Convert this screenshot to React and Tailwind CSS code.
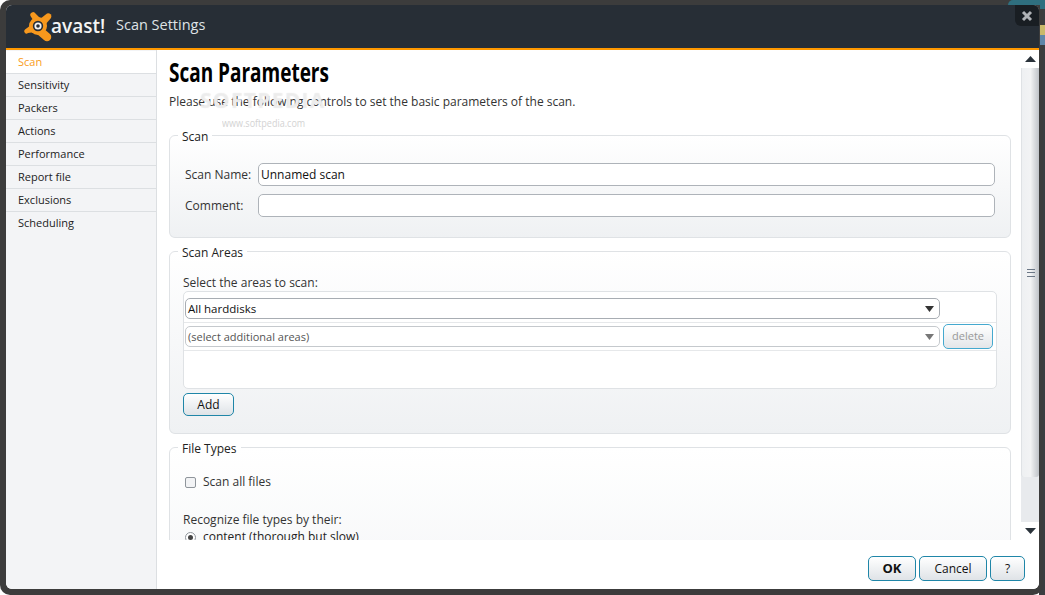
import React from 'react';

const menu = ['Scan', 'Sensitivity', 'Packers', 'Actions', 'Performance', 'Report file', 'Exclusions', 'Scheduling'];

const Logo = () => (
  <svg width="33" height="33" viewBox="0 0 33 33" className="shrink-0">
    <g fill="#f7981d">
      <circle cx="15" cy="16" r="9" />
      <path d="M10 10 L7.5 6 a2.8 2.8 0 0 1 5 -2.5 L17 8z" />
      <path d="M17 9 L24 3.5 a3.2 3.2 0 0 1 4 4.5 L22 15z" />
      <path d="M20 18 L27 24 a4 4 0 1 1 -6 6 L14 24z" />
      <path d="M8 15 L2 19.5 a2.3 2.3 0 0 0 3 3.5 L12 22z" />
    </g>
    <circle cx="15" cy="16" r="5.2" fill="#272e36" />
    <circle cx="15" cy="16" r="3.6" fill="#f2f2f2" />
    <circle cx="15" cy="16" r="1.8" fill="#272e36" />
  </svg>
);

const Arrow = ({ up, small, className }) => (
  <svg width={small ? 9 : 11} height={small ? 6 : 6} viewBox="0 0 11 7" preserveAspectRatio="none" className={className}>
    <path d={up ? 'M5.5 0 L11 7 L0 7z' : 'M0 0 L11 0 L5.5 7z'} fill="currentColor" />
  </svg>
);

const Group = ({ title, className, children }) => (
  <fieldset className={`border border-[#dfe2e5] rounded-md bg-gradient-to-b from-white to-[#eff1f3] ml-[12px] mr-[10px] pl-[13px] pr-[13px] ${className}`}>
    <legend className="-ml-[5px] px-[4px] pt-[4px] text-[12px] leading-[14px] text-[#222]">{title}</legend>
    {children}
  </fieldset>
);

const Select = ({ label, muted }) => (
  <div className={`w-[755px] h-[21px] border rounded-[5px] bg-white pl-[2px] pr-[4px] flex items-center justify-between ${muted ? 'border-[#c5c9cd] text-[11px] text-[#555]' : 'border-[#a8adb3] text-[11.5px] text-[#111]'}`}>
    <span className={muted ? 'pt-[1px]' : ''}>{label}</span>
    <Arrow small className={`mr-[1px] ${muted ? 'text-[#777]' : 'text-[#333]'}`} />
  </div>
);

const Button = ({ children, className }) => (
  <button className={`border border-[#1f86a8] rounded-[5px] bg-gradient-to-b from-white to-[#dfe3e7] text-[12px] text-[#111] ${className}`}>
    {children}
  </button>
);

export default function App() {
  return (
    <div className="relative w-[1045px] h-[595px] overflow-hidden bg-white font-['Open_Sans',sans-serif]">
      <div className="absolute right-0 top-0 w-[6px] h-[595px] bg-[#3a3d40]" />
      <div className="relative w-[1043px] h-[595px] bg-[#3c3c3c] rounded-[10px] pl-[6px] pr-[4px] pt-[5px] pb-[6px]">
        <div className="h-full flex flex-col rounded-[6px] overflow-hidden bg-white">
          <header className="relative h-[45px] shrink-0 bg-[#272e36] border-b-2 border-[#ff9800] flex items-center pl-[17px]">
            <Logo />
            <span className="-ml-[5px] pb-[1px] text-[#f4f4f4] font-semibold text-[19px] leading-none w-[59px] shrink-0">avast!</span>
            <span className="ml-[6px] pb-[4px] text-[#dfe3e6] text-[14.5px]">Scan Settings</span>
            <div className="absolute right-0 top-0 w-[24px] h-[21px] bg-[#191e23] rounded-bl-[6px] flex items-center justify-center">
              <svg width="12" height="12" viewBox="0 0 12 12">
                <path d="M2 2 L10 10 M10 2 L2 10" stroke="#b0b3b7" strokeWidth="3" />
              </svg>
            </div>
          </header>

          <div className="flex-1 flex min-h-0">
            <nav className="w-[151px] shrink-0 pt-[1px] bg-[#f3f4f6] border-r border-[#dcdfe2]">
              {menu.map((item, i) => (
                <div
                  key={item}
                  className={`h-[23px] pl-[12px] flex items-center text-[11px] border-b border-[#dcdfe2] last:border-b-0 ${i === 0 ? 'bg-white text-[#f99d1c]' : 'text-[#222]'}`}
                >
                  {item}
                </div>
              ))}
            </nav>

            <div className="flex-1 min-w-0 flex flex-col">
              <div className="flex-1 min-h-0 flex">
                <main className="relative flex-1 min-w-0 h-[490px] overflow-hidden">
                  <h1 className="ml-[12px] pt-[6px] text-[26px] leading-[32px] font-bold text-black scale-x-[0.73] origin-left whitespace-nowrap">Scan Parameters</h1>
                  <p className="pl-[12px] pt-[6px] text-[12px] leading-[16px] text-[#333]">Please use the following controls to set the basic parameters of the scan.</p>

                  {/* softpedia watermark */}
                  <div className="absolute left-[43px] top-[37px] text-[21px] leading-[26px] font-bold tracking-[1.3px] text-white/40 [text-shadow:0_0_1px_#e2e2e2]">SOFTPEDIA</div>
                  <div className="absolute left-[65px] top-[65px] text-[11px] text-[#c9c9c9] opacity-80 scale-x-[0.82] origin-left">www.softpedia.com</div>

                  <Group title="Scan" className="mt-[16px] h-[112px]">
                    <div className="pt-[19px] text-[12px] text-[#333]">
                      <div className="flex items-center h-[23px]">
                        <label className="w-[75px] pl-[2px]">Scan Name:</label>
                        <input readOnly value="Unnamed scan" className="w-[737px] h-[23px] border border-[#aeb3b9] rounded-[5px] bg-white px-[2px] text-[12px] text-[#111]" />
                      </div>
                      <div className="flex items-center h-[23px] mt-[8px]">
                        <label className="w-[75px] pl-[2px]">Comment:</label>
                        <input readOnly className="w-[737px] h-[23px] border border-[#aeb3b9] rounded-[5px] bg-white" />
                      </div>
                    </div>
                  </Group>

                  <Group title="Scan Areas" className="mt-[4px] h-[192px]">
                    <div className="pt-[15px] text-[12px] leading-[16px] text-[#333]">Select the areas to scan:</div>
                    <div className="h-[98px] w-[814px] border border-[#dfe2e5] rounded-[5px] bg-white flex flex-col">
                      <div className="h-[31px] border-b border-[#e6e8ea] pl-[1px] pt-[6px]">
                        <Select label="All harddisks" />
                      </div>
                      <div className="h-[28px] border-b border-[#e6e8ea] pl-[1px] flex items-center gap-[3px]">
                        <Select label="(select additional areas)" muted />
                        <button className="w-[50px] h-[25px] border border-[#45a9cf] rounded-[5px] bg-gradient-to-b from-white to-[#e4e6e9] text-[11px] text-[#999]">delete</button>
                      </div>
                    </div>
                    <Button className="mt-[4px] w-[51px] h-[23px]">Add</Button>
                  </Group>

                  <Group title="File Types" className="mt-[4px] h-[240px]">
                    <div className="pt-[17px] pl-[2px] flex items-center text-[12px] text-[#333]">
                      <span className="w-[11px] h-[11px] border border-[#8f959b] rounded-[2px] bg-[#f2f3f5] mr-[7px]" />
                      Scan all files
                    </div>
                    <div className="pt-[21px] text-[12px] leading-[16px] text-[#333]">Recognize file types by their:</div>
                    <div className="mt-[1px] pl-[2px] flex items-center text-[12px] leading-[16px] text-[#222]">
                      <span className="w-[11px] h-[11px] border border-[#8f959b] rounded-full bg-white mr-[7px] flex items-center justify-center">
                        <span className="w-[5px] h-[5px] rounded-full bg-[#444]" />
                      </span>
                      content (thorough but slow)
                    </div>
                  </Group>
                </main>

                <div className="w-[18px] shrink-0 h-[490px] flex flex-col items-center text-[#2a323a]">
                  <div className="h-[18px] pt-[6px] flex justify-center"><Arrow up /></div>
                  <div className="flex-1 w-full bg-[#e8eaed] flex flex-col">
                    <div className="h-[409px] rounded-b-[3px] border-l border-[#dfe2e5] bg-gradient-to-r from-[#eef0f2] via-[#f2f3f4] to-[#bfc3c8] flex items-center justify-center">
                      <div className="w-[8px] h-[8px] border-y border-[#6b7786] flex items-center"><div className="w-full h-px bg-[#6b7786]" /></div>
                    </div>
                  </div>
                  <div className="h-[18px] flex items-center justify-center"><Arrow /></div>
                </div>
              </div>

              <footer className="h-[49px] shrink-0 bg-white flex items-start justify-end gap-[3px] pt-[16px] pr-[14px]">
                <Button className="w-[48px] h-[25px] font-bold text-[13px]">OK</Button>
                <Button className="w-[68px] h-[25px]">Cancel</Button>
                <Button className="w-[35px] h-[25px]">?</Button>
              </footer>
            </div>
          </div>
        </div>
      </div>

      {/* desktop showing behind the window */}
      <div className="absolute right-[5px] top-0 w-[32px] h-[5px] rounded-tl-[12px] bg-[#2f6f7f]" />
      <div className="absolute right-0 top-0 w-[5px] h-[9px] bg-[#2f6f7f]" />
      <div className="absolute right-0 top-[25px] w-[5px] h-[10px] bg-[#c9b96a]" />
      <div className="absolute right-0 top-[35px] w-[5px] h-[10px] bg-[#5f86a8]" />
    </div>
  );
}
